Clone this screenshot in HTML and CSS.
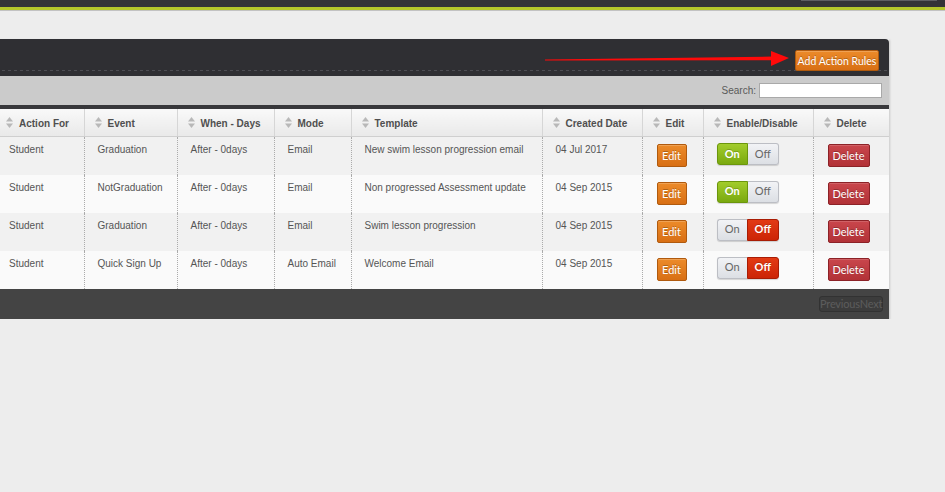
FILE: index.html
```html
<!DOCTYPE html>
<html>
<head>
  <meta charset="utf-8">
  <link rel="stylesheet" href="styles.css">
</head>
<body>
  <div class="topbar">
    <div class="user-box"></div>
  </div>
  <div class="green-rule"></div>

  <div class="content">
    <div class="panel">
      <div class="panel-head">
        <!-- hint arrow pointing at the add button -->
        <svg class="hint-arrow" width="250" height="20" viewBox="0 0 250 20">
          <polygon points="0,10.6 228,7.6 228,11.2 0,11.6" fill="#ff0a0a"/>
          <polygon points="226,2 244,9 226,17" fill="#ff0a0a"/>
        </svg>
        <button class="btn btn-orange add-btn">Add Action Rules</button>
      </div>

      <div class="toolbar">
        <label for="search">Search:</label>
        <input type="text" id="search">
      </div>

      <table class="rules">
        <colgroup>
          <col style="width: 88px">
          <col style="width: 93px">
          <col style="width: 97px">
          <col style="width: 77px">
          <col style="width: 191px">
          <col style="width: 100px">
          <col style="width: 61px">
          <col style="width: 110px">
          <col style="width: 76px">
        </colgroup>
        <thead>
          <tr>
            <th><svg class="sort" width="7" height="11" viewBox="0 0 7 11"><polygon points="0,4.5 3.5,0 7,4.5"/><polygon points="0,6.5 3.5,11 7,6.5"/></svg>Action For</th>
            <th><svg class="sort" width="7" height="11" viewBox="0 0 7 11"><polygon points="0,4.5 3.5,0 7,4.5"/><polygon points="0,6.5 3.5,11 7,6.5"/></svg>Event</th>
            <th><svg class="sort" width="7" height="11" viewBox="0 0 7 11"><polygon points="0,4.5 3.5,0 7,4.5"/><polygon points="0,6.5 3.5,11 7,6.5"/></svg>When - Days</th>
            <th><svg class="sort" width="7" height="11" viewBox="0 0 7 11"><polygon points="0,4.5 3.5,0 7,4.5"/><polygon points="0,6.5 3.5,11 7,6.5"/></svg>Mode</th>
            <th><svg class="sort" width="7" height="11" viewBox="0 0 7 11"><polygon points="0,4.5 3.5,0 7,4.5"/><polygon points="0,6.5 3.5,11 7,6.5"/></svg>Template</th>
            <th><svg class="sort" width="7" height="11" viewBox="0 0 7 11"><polygon points="0,4.5 3.5,0 7,4.5"/><polygon points="0,6.5 3.5,11 7,6.5"/></svg>Created Date</th>
            <th><svg class="sort" width="7" height="11" viewBox="0 0 7 11"><polygon points="0,4.5 3.5,0 7,4.5"/><polygon points="0,6.5 3.5,11 7,6.5"/></svg>Edit</th>
            <th><svg class="sort" width="7" height="11" viewBox="0 0 7 11"><polygon points="0,4.5 3.5,0 7,4.5"/><polygon points="0,6.5 3.5,11 7,6.5"/></svg>Enable/Disable</th>
            <th><svg class="sort" width="7" height="11" viewBox="0 0 7 11"><polygon points="0,4.5 3.5,0 7,4.5"/><polygon points="0,6.5 3.5,11 7,6.5"/></svg>Delete</th>
          </tr>
        </thead>
        <tbody>
          <tr>
            <td>Student</td>
            <td>Graduation</td>
            <td>After - 0days</td>
            <td>Email</td>
            <td>New swim lesson progression email</td>
            <td>04 Jul 2017</td>
            <td class="act"><button class="btn btn-orange">Edit</button></td>
            <td class="act">
              <div class="toggle is-on"><span class="on">On</span><span class="off">Off</span></div>
            </td>
            <td class="act"><button class="btn btn-red">Delete</button></td>
          </tr>
          <tr>
            <td>Student</td>
            <td>NotGraduation</td>
            <td>After - 0days</td>
            <td>Email</td>
            <td>Non progressed Assessment update</td>
            <td>04 Sep 2015</td>
            <td class="act"><button class="btn btn-orange">Edit</button></td>
            <td class="act">
              <div class="toggle is-on"><span class="on">On</span><span class="off">Off</span></div>
            </td>
            <td class="act"><button class="btn btn-red">Delete</button></td>
          </tr>
          <tr>
            <td>Student</td>
            <td>Graduation</td>
            <td>After - 0days</td>
            <td>Email</td>
            <td>Swim lesson progression</td>
            <td>04 Sep 2015</td>
            <td class="act"><button class="btn btn-orange">Edit</button></td>
            <td class="act">
              <div class="toggle is-off"><span class="on">On</span><span class="off">Off</span></div>
            </td>
            <td class="act"><button class="btn btn-red">Delete</button></td>
          </tr>
          <tr>
            <td>Student</td>
            <td>Quick Sign Up</td>
            <td>After - 0days</td>
            <td>Auto Email</td>
            <td>Welcome Email</td>
            <td>04 Sep 2015</td>
            <td class="act"><button class="btn btn-orange">Edit</button></td>
            <td class="act">
              <div class="toggle is-off"><span class="on">On</span><span class="off">Off</span></div>
            </td>
            <td class="act"><button class="btn btn-red">Delete</button></td>
          </tr>
        </tbody>
      </table>

      <div class="panel-foot">
        <span class="pager">PreviousNext</span>
      </div>
    </div>
  </div>
</body>
</html>
```

FILE: styles.css
```css
body {
  margin: 0;
  background-color: #ededed;
  font-family: "Liberation Sans", Arial, sans-serif;
  font-size: 10px;
  color: #555;
  overflow: hidden;
}

.topbar {
  height: 7px;
  background-color: #333337;
  display: flex;
  justify-content: flex-end;
}

.user-box {
  width: 134px;
  height: 0;
  margin-right: 8px;
  border: 1px solid #5e5e62;
  border-top: none;
  background-color: #2b2b2f;
}

.green-rule {
  height: 3px;
  background-color: #b4c62b;
  border-bottom: 1px solid #c2c2c2;
}

.content {
  padding-top: 28px;
}

.panel {
  width: 893px;
  margin-left: -4px;
  box-shadow: 1px 1px 2px rgba(0,0,0,0.15);
}

.panel-head {
  position: relative;
  height: 26px;
  padding: 11px 10px 0 0;
  display: flex;
  justify-content: flex-end;
  align-items: flex-start;
  background-color: #2f2f33;
  background-image: repeating-linear-gradient(90deg, #4d4d53 0 3px, transparent 3px 6px);
  background-size: 100% 1px;
  background-position: 0 31px;
  background-repeat: no-repeat;
  border-radius: 0 4px 0 0;
}

.hint-arrow {
  position: absolute;
  left: 549px;
  top: 10px;
}

.btn {
  font-family: Lato, "Liberation Sans", sans-serif;
  font-size: 11px;
  color: #fff;
  text-shadow: 0 -1px 0 rgba(0,0,0,0.25);
  white-space: nowrap;
  border-radius: 2px;
  padding: 0;
  height: 23px;
  cursor: pointer;
}

.btn-orange {
  width: 30px;
  background: linear-gradient(#ec8b2a, #d86f14);
  border: 1px solid #b05a0e;
  box-shadow: inset 0 1px 0 rgba(255,255,255,0.2);
}

.btn-red {
  width: 42px;
  background: linear-gradient(#c9464c, #b23237);
  border: 1px solid #8c2227;
  box-shadow: inset 0 1px 0 rgba(255,255,255,0.15);
}

.add-btn {
  width: 84px;
  height: 21px;
  font-size: 10.5px;
  position: relative;
}

.toolbar {
  height: 29px;
  padding-right: 7px;
  display: flex;
  justify-content: flex-end;
  align-items: center;
  gap: 3px;
  background-color: #cbcbcb;
  border-bottom: 4px solid #38383b;
}

.toolbar label {
  color: #5a5a5a;
}

.toolbar input {
  width: 121px;
  height: 13px;
  padding: 0;
  margin: 0 0 1px;
  border: 1px solid #a9a9a9;
  background: #fff;
}

.rules {
  width: 893px;
  table-layout: fixed;
  border-collapse: collapse;
}

.rules th {
  height: 27px;
  padding: 0 0 0 10px;
  text-align: left;
  font-weight: bold;
  color: #4f4f4f;
  white-space: nowrap;
  background: linear-gradient(#f9f9f9, #e9e9e9);
  border-left: 1px solid #d6d6d6;
  border-bottom: 1px solid #cfcfcf;
}

.rules th:first-child,
.rules td:first-child {
  border-left: none;
}

.sort {
  fill: #b8b8b8;
  margin-right: 6px;
  vertical-align: -1px;
}

.rules tbody tr {
  height: 38px;
  background-color: #fafafa;
}

.rules tbody tr:nth-child(odd) {
  background-color: #f1f1f1;
}

.rules td {
  vertical-align: top;
  padding: 7px 13px 0;
  line-height: 12px;
  border-left: 1px dotted #ababab;
  white-space: nowrap;
}

.rules td.act {
  padding-top: 7px;
  padding-left: 14px;
  line-height: normal;
}

.toggle {
  display: flex;
  width: 62px;
  height: 22px;
  margin-top: -1px;
  margin-left: -1px;
  font-family: Lato, "Liberation Sans", sans-serif;
  font-size: 11px;
  border-radius: 3px;
  box-shadow: 0 1px 1px rgba(0,0,0,0.15);
}

.toggle span {
  flex: 1;
  display: flex;
  align-items: center;
  justify-content: center;
  padding-bottom: 2px;
  box-sizing: border-box;
  color: #666;
  background: linear-gradient(#f2f3f6, #dcdfe4);
  border: 1px solid #bcbec4;
}

.toggle .on {
  border-radius: 3px 0 0 3px;
}

.toggle .off {
  border-radius: 0 3px 3px 0;
}

.toggle.is-on .on {
  color: #fff;
  font-weight: bold;
  background: linear-gradient(#a2cc2c, #7aa90f);
  border-color: #6b960c;
  text-shadow: 0 -1px 0 rgba(0,0,0,0.2);
}

.toggle.is-on .off {
  border-left: none;
}

.toggle.is-off .off {
  color: #fff;
  font-weight: bold;
  background: linear-gradient(#e23a14, #cc2406);
  border-color: #a81c04;
  text-shadow: 0 -1px 0 rgba(0,0,0,0.2);
}

.toggle.is-off .on {
  border-right: none;
}

.panel-foot {
  height: 30px;
  padding: 7px 6px 0 0;
  box-sizing: border-box;
  display: flex;
  justify-content: flex-end;
  align-items: flex-start;
  background-color: #444;
}

.pager {
  width: 62px;
  height: 14px;
  line-height: 14px;
  text-align: center;
  font-family: Lato, "Liberation Sans", sans-serif;
  font-size: 11px;
  letter-spacing: -0.2px;
  color: #5c5c5c;
  background-color: #3c3c3c;
  border: 1px solid #323232;
  border-radius: 3px;
}
```
